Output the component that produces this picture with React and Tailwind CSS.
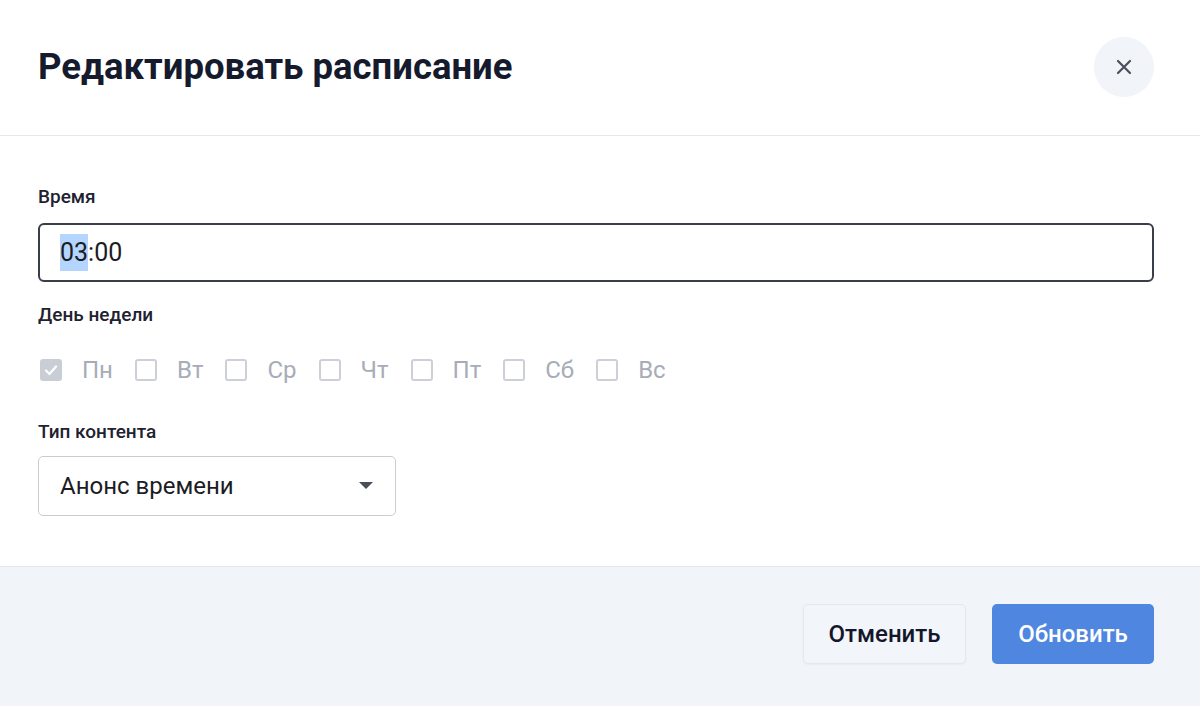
import React from "react";

const days = ["Пн", "Вт", "Ср", "Чт", "Пт", "Сб", "Вс"];

export default function App() {
  return (
    <div className="w-[1200px] h-[706px] bg-white flex flex-col overflow-hidden" style={{ fontFamily: "Roboto, 'Noto Sans', sans-serif" }}>
      <div className="h-[136px] shrink-0 flex items-center justify-between pl-[38px] pr-[46px] border-b border-[#e5e7eb]">
        <h1 className="text-[36.5px] font-bold text-[#151a2d] leading-none -mt-[1px]">Редактировать расписание</h1>
        <button className="w-[60px] h-[60px] rounded-full bg-[#f1f4f8] flex items-center justify-center -mt-[2px]">
          <svg width="18" height="18" viewBox="0 0 18 18" fill="none" stroke="#4b4f5c" strokeWidth="2.2" strokeLinecap="round">
            <path d="M3 3L15 15M15 3L3 15" />
          </svg>
        </button>
      </div>
      <div className="flex-1 flex flex-col px-[38px] pr-[46px] pt-[51px]">
        <label className="text-[19px] font-medium text-[#1f2230] leading-[20px]">Время</label>
        <div className="mt-[16px] h-[59px] border-2 border-[#3a3d4a] rounded-[6px] flex items-center px-[20px] text-[25px] text-[#1c1c24]">
          <span className="bg-[#b4d5fd]">03</span>
          <span>:00</span>
        </div>
        <label className="mt-[23px] text-[19px] font-medium text-[#1f2230] leading-[20px]">День недели</label>
        <div className="mt-[33px] h-[24px] flex items-center">
          {days.map((d, i) => (
            <div key={d} className="flex items-center mr-[22px]">
              {i === 0 ? (
                <span className="w-[22px] h-[22px] ml-[2px] rounded-[3px] bg-[#c9cdd6] flex items-center justify-center">
                  <svg width="16" height="16" viewBox="0 0 16 16" fill="none" stroke="#fff" strokeWidth="2.2" strokeLinecap="round" strokeLinejoin="round">
                    <path d="M3 8.5L6.5 12L13 4.5" />
                  </svg>
                </span>
              ) : (
                <span className="w-[22px] h-[22px] rounded-[3px] border-2 border-[#cdd0d8] bg-white" />
              )}
              <span className="ml-[20px] text-[24px] text-[#a8acb8] leading-none">{d}</span>
            </div>
          ))}
        </div>
        <label className="mt-[40px] text-[19px] font-medium text-[#1f2230] leading-[20px]">Тип контента</label>
        <div className="mt-[14px] w-[358px] h-[60px] border border-[#c9ccd3] rounded-[5px] flex items-center justify-between pl-[21px] pr-[22px]">
          <span className="text-[24px] text-[#1c1c24]">Анонс времени</span>
          <svg width="14" height="8" viewBox="0 0 14 8"><path d="M0 0H14L7 7Z" fill="#4a4d5a" /></svg>
        </div>
      </div>
      <div className="h-[140px] shrink-0 bg-[#f1f4f8] border-t border-[#e3e6ea] flex items-center justify-end gap-[26px] pr-[46px] pb-[5px]">
        <button className="w-[163px] h-[60px] rounded-[5px] bg-[#f2f5f9] border border-[#e4e7ec] shadow-[0_1px_2px_rgba(0,0,0,0.04)] text-[24px] font-medium text-[#14172a]">Отменить</button>
        <button className="w-[162px] h-[60px] rounded-[5px] bg-[#4f87e0] text-[24px] font-medium text-white">Обновить</button>
      </div>
    </div>
  );
}
